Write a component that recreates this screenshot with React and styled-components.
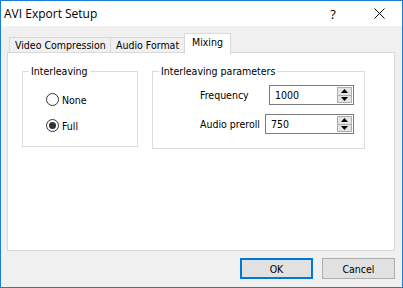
import React from 'react';
import styled, { createGlobalStyle } from 'styled-components';

const Global = createGlobalStyle`
  html, body { margin:0; padding:0; background:#fff; }
  body { font-family: 'DejaVu Sans Condensed', 'DejaVu Sans', sans-serif; font-size:10.5px; color:#000; }
`;

const Window = styled.div`
  width:403px;
  height:288px;
  box-sizing:border-box;
  border:1px solid #1a7fd4;
  display:flex;
  flex-direction:column;
  background:#f0f0f0;
  overflow:hidden;
`;

const TitleBar = styled.div`
  height:25px;
  flex:none;
  background:#fff;
  display:flex;
  align-items:center;
  padding-left:3px;
`;

const Title = styled.div`
  flex:1;
  font-family:'Open Sans', 'Noto Sans', sans-serif;
  font-size:12px;
  color:#000;
  padding-bottom:1px;
`;

const TitleButton = styled.div`
  width:${p => p.$w}px;
  height:25px;
  display:flex;
  align-items:center;
  justify-content:center;
  font-family:'Open Sans', sans-serif;
  font-size:13px;
`;

const Body = styled.div`
  flex:1;
  display:flex;
  flex-direction:column;
  padding:7px 7px 8px 6px;
`;

const TabRow = styled.div`
  display:flex;
  align-items:flex-end;
  height:20px;
  padding-left:2px;
  position:relative;
  z-index:1;
`;

const Tab = styled.div`
  box-sizing:border-box;
  width:${p => p.$w}px;
  height:${p => (p.$active ? 21 : 16)}px;
  margin:${p => (p.$active ? '0 -2px 0 -1px' : '0')};
  border:1px solid #d9d9d9;
  border-bottom:${p => (p.$active ? 'none' : '1px solid #d9d9d9')};
  border-left:${p => (p.$first || p.$active ? '1px solid #d9d9d9' : 'none')};
  background:${p => (p.$active ? '#fff' : '#f0f0f0')};
  padding:${p => (p.$active ? '2px 0 0 7px' : '1px 0 0 5px')};
  line-height:13px;
  white-space:nowrap;
  margin-bottom:${p => (p.$active ? '-1px' : '0')};
`;

const Pane = styled.div`
  flex:1;
  margin-top:-1px;
  border:1px solid #d9d9d9;
  background:#fff;
  display:flex;
  align-items:flex-start;
  gap:14px;
  padding:12px 0 0 14px;
`;

const Group = styled.fieldset`
  margin:0;
  box-sizing:border-box;
  width:${p => p.$w}px;
  height:${p => p.$h}px;
  border:1px solid #dcdcdc;
  padding:0;
  min-width:0;
`;

const Legend = styled.legend`
  margin-left:6px;
  padding:0 2px;
  line-height:13px;
`;

const RadioList = styled.div`
  display:flex;
  flex-direction:column;
  gap:13px;
  padding:15px 0 0 23px;
`;

const RadioRow = styled.label`
  display:flex;
  align-items:center;
  gap:3px;
  height:13px;
`;

const RadioCircle = styled.span`
  box-sizing:border-box;
  width:13px;
  height:13px;
  border-radius:50%;
  border:1px solid #333;
  background:#fff;
  display:flex;
  align-items:center;
  justify-content:center;
  &::after {
    content:'';
    display:${p => (p.$checked ? 'block' : 'none')};
    width:7px;
    height:7px;
    border-radius:50%;
    background:#333;
  }
`;

const Params = styled.div`
  display:flex;
  flex-direction:column;
  gap:9px;
  padding:7px 0 0 47px;
`;

const ParamRow = styled.div`
  display:flex;
  align-items:center;
`;

const ParamLabel = styled.span`
  width:${p => p.$w}px;
`;

const SpinBox = styled.div`
  box-sizing:border-box;
  width:${p => p.$w}px;
  height:20px;
  border:1px solid #7a7a7a;
  background:#fff;
  display:flex;
  align-items:center;
  padding:1px 1px 1px 5px;
`;

const SpinValue = styled.span`
  flex:1;
`;

const SpinButtons = styled.div`
  width:15px;
  height:100%;
  display:flex;
  flex-direction:column;
`;

const SpinHalf = styled.div`
  flex:1;
  box-sizing:border-box;
  border:1px solid #adadad;
  border-top:${p => (p.$down ? 'none' : '1px solid #adadad')};
  background:#e5e5e5;
  display:flex;
  align-items:center;
  justify-content:center;
`;

const Footer = styled.div`
  display:flex;
  justify-content:flex-end;
  gap:9px;
  margin-top:7px;
`;

const Button = styled.button`
  box-sizing:border-box;
  width:73px;
  height:21px;
  padding:0;
  font:inherit;
  color:#000;
  background:#e1e1e1;
  border:${p => (p.$default ? '2px solid #0078d7' : '1px solid #adadad')};
`;

const Arrow = ({ down }) => (
  <svg width="7" height="4" viewBox="0 0 7 4">
    <path d={down ? 'M0 0h7L3.5 4z' : 'M3.5 0L7 4H0z'} fill="#000" />
  </svg>
);

const Spin = ({ value, width }) => (
  <SpinBox $w={width}>
    <SpinValue>{value}</SpinValue>
    <SpinButtons>
      <SpinHalf><Arrow /></SpinHalf>
      <SpinHalf $down><Arrow down /></SpinHalf>
    </SpinButtons>
  </SpinBox>
);

export default function App() {
  return (
    <>
      <Global />
      <Window>
        <TitleBar>
          <Title>AVI Export Setup</Title>
          <TitleButton $w={46}>?</TitleButton>
          <TitleButton $w={46}>
            <svg width="11" height="11" viewBox="0 0 11 11">
              <path d="M0.5 0.5L10.5 10.5M10.5 0.5L0.5 10.5" stroke="#000" strokeWidth="1" />
            </svg>
          </TitleButton>
        </TitleBar>
        <Body>
          <TabRow>
            <Tab $w={102} $first>Video Compression</Tab>
            <Tab $w={74}>Audio Format</Tab>
            <Tab $w={47} $active>Mixing</Tab>
          </TabRow>
          <Pane>
            <Group $w={116} $h={82}>
              <Legend>Interleaving</Legend>
              <RadioList>
                <RadioRow><RadioCircle />None</RadioRow>
                <RadioRow><RadioCircle $checked />Full</RadioRow>
              </RadioList>
            </Group>
            <Group $w={213} $h={84}>
              <Legend>Interleaving parameters</Legend>
              <Params>
                <ParamRow>
                  <ParamLabel $w={69}>Frequency</ParamLabel>
                  <Spin value="1000" width={85} />
                </ParamRow>
                <ParamRow>
                  <ParamLabel $w={65}>Audio preroll</ParamLabel>
                  <Spin value="750" width={89} />
                </ParamRow>
              </Params>
            </Group>
          </Pane>
          <Footer>
            <Button $default>OK</Button>
            <Button>Cancel</Button>
          </Footer>
        </Body>
      </Window>
    </>
  );
}
